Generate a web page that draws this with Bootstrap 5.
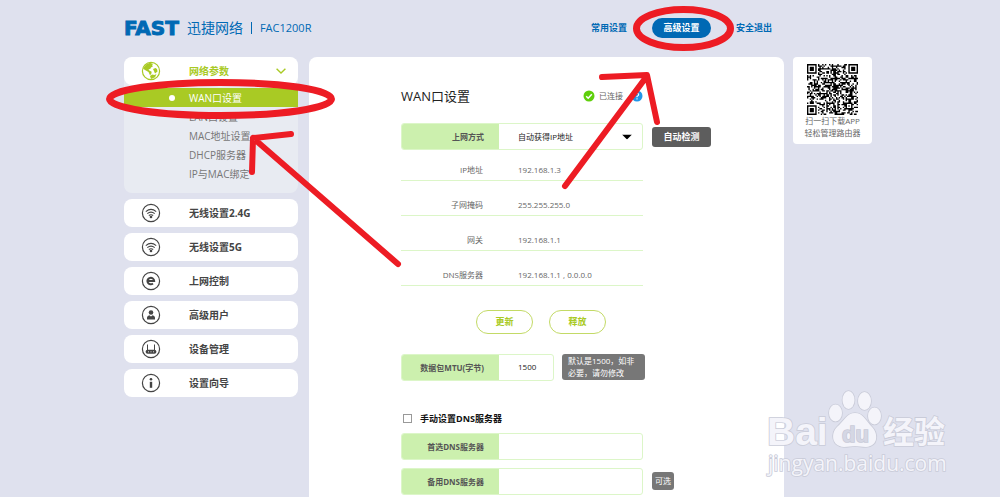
<!DOCTYPE html>
<html lang="zh-CN">
<head>
<meta charset="utf-8">
<meta name="viewport" content="width=device-width, initial-scale=1">
<title>FAST FAC1200R</title>
<link href="https://cdn.jsdelivr.net/npm/bootstrap@5.3.0/dist/css/bootstrap.min.css" rel="stylesheet">
<style>
  :root { --blue:#0069b4; --lime:#a9ca24; --mint:#ccf0ae; --mint-line:#dcf6c8; --page:#dfe1ee; }
  body { background:var(--page); font:8px/12px "Open Sans","Noto Sans CJK SC",sans-serif; color:#666; min-height:100vh; }
  button, input, select { font-family:inherit; }
  .shell { max-width:752px; min-height:100vh; }
  .topbar { height:57px; padding-bottom:2px; color:var(--blue); }
  .logo { font:bold 20px/20px "DejaVu Sans",sans-serif; -webkit-text-stroke:1px var(--blue); }
  .brand-cn { font-size:14px; line-height:20px; }
  .model { font-size:11px; line-height:12px; border-left:1px solid var(--blue); }
  .topnav { gap:25px; margin-right:100px; }
  .topnav a { font-size:9px; font-weight:700; line-height:20px; color:var(--blue); text-decoration:none; }
  .topnav a.active { background:var(--blue); color:#fff; width:59px; text-align:center; border-radius:10px; }
  .side { width:174px; gap:6px; }
  .group { background:#e8ebf2; border-radius:8px; padding-bottom:10px; }
  .entry { height:28px; background:#fff; border-radius:8px; color:#444; font-size:10px; font-weight:700; text-decoration:none; padding:0 12px 0 17px; }
  .entry svg.ico { width:20px; height:20px; margin-right:28px; }
  .entry.open { color:var(--lime); }
  .sub { padding-top:3px; }
  .sub a { display:flex; align-items:center; height:19px; padding-left:65px; font-size:10px; color:#777; text-decoration:none; }
  .sub a.active { background:var(--lime); color:#fff; padding-left:45px; }
  .sub a.active::before { content:""; width:6px; height:6px; border-radius:50%; background:#fff; margin-right:14px; }
  .panel { background:#fff; border-radius:8px 8px 0 0; margin:0 9px 0 11px; padding:27px 24px 0 92px; }
  .panel h1 { font-size:13px; line-height:24px; font-weight:400; color:#222; }
  .heading { margin-bottom:15px; }
  .wide { width:242px; }
  .line { gap:9px; }
  .field { height:27px; border:1px solid var(--mint-line); border-radius:3px; overflow:hidden; background:#fff; }
  .field label { width:97px; background:var(--mint); color:#555; font-weight:700; line-height:25px; text-align:right; padding-right:15px; flex:none; }
  .field input, .field select { min-width:0; flex:1; border:0; outline:0; background:transparent; color:#222; font-size:8px; padding:0 0 0 19px; appearance:none; }
  .mtu { width:153px; }
  .info th, .info td { height:35px; border-bottom:1px solid var(--mint-line); vertical-align:bottom; padding:0 0 4px; font-weight:400; }
  .info tr:first-child > * { height:30px; }
  .info th { width:98px; text-align:right; padding-right:16px; }
  .info td { padding-left:19px; }
  .actions { padding-right:37px; }
  .pill { width:57px; height:24px; padding:0; border:1px solid #c3da66; border-radius:12px; background:#fff; color:var(--lime); font-size:9px; font-weight:700; }
  .detect { width:59px; height:20px; padding:0; border:0; border-radius:3px; background:#5d5d5d; color:#fff; font-size:9px; font-weight:700; }
  .tip { background:#777; color:#fff; border-radius:3px; }
  .tip-mtu { width:83px; padding:1px 6px; }
  .tip-opt { padding:3px; }
  .tick { width:9px; height:9px; margin:0; appearance:none; border:1px solid #999; border-radius:0; background:#fff; }
  .tick:checked { background:var(--lime); }
  .manual { font-size:9px; font-weight:700; color:#111; padding:8px 0 0 2px; }
  .app { width:79px; height:87px; background:#fff; border-radius:4px; padding-top:7px; }
  .marks { position:absolute; left:0; top:0; width:748px; height:497px; overflow:visible; pointer-events:none; }
</style>
</head>
<body>
<div class="shell mx-auto pe-1 d-flex flex-column position-relative">
  <header class="topbar d-flex align-items-center justify-content-between">
    <div class="d-flex align-items-center">
      <span class="logo">FAST</span>
      <span class="brand-cn ms-2">迅捷网络</span>
      <span class="model ms-2 ps-2">FAC1200R</span>
    </div>
    <nav class="topnav d-flex align-items-center">
      <a href="#">常用设置</a><a href="#" class="active">高级设置</a><a href="#">安全退出</a>
    </nav>
  </header>

  <div class="d-flex flex-grow-1">
    <nav class="side d-flex flex-column flex-shrink-0">
      <div class="group">
        <a href="#" class="entry open d-flex align-items-center">
          <svg class="ico" viewBox="0 0 20 20"><circle cx="10" cy="10" r="8.600" fill="none" stroke="#a9ca24" stroke-width="1.200"/><path d="M5 3.500 9 1.800 12 3l-1 1.200 1 1-2 1.200-.8 1.600-1.700.2.8 1.400 2.400 1.200-.4 2-1.300 1.400L7.500 11 4 9 2 7.500zM12 8l2.500-1 1.500 1 .5 2.500L14 12.500l-.8-2zM9 15l2-1.500 2.500.5 2-1-1.500 3.200-4 1.800z" fill="#a9ca24"/></svg>
          <span>网络参数</span>
          <svg class="ms-auto" width="10" height="6" viewBox="0 0 10 6" fill="none" stroke="#a9ca24" stroke-width="1.400"><path d="M.6.7 5 5 9.400.7"/></svg>
        </a>
        <div class="sub">
          <a href="#" class="active">WAN口设置</a><a href="#">LAN口设置</a><a href="#">MAC地址设置</a><a href="#">DHCP服务器</a><a href="#">IP与MAC绑定</a>
        </div>
      </div>
      <a href="#" class="entry d-flex align-items-center"><svg class="ico" viewBox="0 0 20 20"><use href="#wifi"/></svg>无线设置2.4G</a>
      <a href="#" class="entry d-flex align-items-center"><svg class="ico" viewBox="0 0 20 20"><use href="#wifi"/></svg>无线设置5G</a>
      <a href="#" class="entry d-flex align-items-center"><svg class="ico" viewBox="0 0 20 20" fill="none" stroke="#444"><circle cx="10" cy="10" r="8.600" stroke-width="1.200"/><path d="M6.800 10h6.400a3.400 3.200 0 1 0-1.200 2.500" stroke-width="2"/></svg>上网控制</a>
      <a href="#" class="entry d-flex align-items-center"><svg class="ico" viewBox="0 0 20 20"><circle cx="10" cy="10" r="8.600" fill="none" stroke="#444" stroke-width="1.200"/><circle cx="10" cy="7.500" r="2.300" fill="#444"/><path d="M6 14.500v-2q.3-2 2.400-2.200L10 11.500l1.600-1.200q2.100.2 2.400 2.200v2z" fill="#444"/></svg>高级用户</a>
      <a href="#" class="entry d-flex align-items-center"><svg class="ico" viewBox="0 0 20 20"><circle cx="10" cy="10" r="8.600" fill="none" stroke="#444" stroke-width="1.200"/><path d="M6.500 5.500V11M13.500 5.500V11" stroke="#444"/><rect x="4.600" y="10.800" width="10.800" height="4" rx="2" fill="#444"/><path d="M7 12.800h1M9.500 12.800h1M12 12.800h1" stroke="#ddd"/></svg>设备管理</a>
      <a href="#" class="entry d-flex align-items-center"><svg class="ico" viewBox="0 0 20 20" fill="#444"><circle cx="10" cy="10" r="8.600" fill="none" stroke="#444" stroke-width="1.200"/><circle cx="10" cy="6.200" r="1.300"/><rect x="8.800" y="8.800" width="2.400" height="6"/></svg>设置向导</a>
    </nav>

    <main class="panel flex-grow-1">
      <div class="heading wide d-flex align-items-center">
        <h1 class="m-0">WAN口设置</h1>
        <svg class="ms-auto" width="12" height="12" viewBox="0 0 12 12"><circle cx="6" cy="6" r="5.500" fill="#5fcf0b"/><path d="m3.200 6.200 2 2 3.600-3.900" fill="none" stroke="#fff" stroke-width="1.500"/></svg>
        <span class="ms-1">已连接</span>
        <svg class="ms-2" width="12" height="12" viewBox="0 0 12 12"><circle cx="6" cy="6" r="5.500" fill="#2196e8"/><path d="M4.300 4.800Q4.400 3.200 6 3.200t1.700 1.500Q7.700 5.500 6 6.400v.9M6 8.200v1.200" fill="none" stroke="#fff" stroke-width="1.100"/></svg>
      </div>

      <div class="line d-flex align-items-center">
        <div class="field wide d-flex position-relative">
          <label for="mode">上网方式</label>
          <select id="mode"><option>自动获得IP地址</option></select>
          <svg class="position-absolute end-0 top-50 translate-middle-y me-2 pe-none" width="14" height="5" viewBox="0 0 14 5"><path d="M2 0h10L7 5z"/></svg>
        </div>
        <button type="button" class="detect">自动检测</button>
      </div>

      <table class="info wide">
        <tr><th scope="row">IP地址</th><td>192.168.1.3</td></tr>
        <tr><th scope="row">子网掩码</th><td>255.255.255.0</td></tr>
        <tr><th scope="row">网关</th><td>192.168.1.1</td></tr>
        <tr><th scope="row">DNS服务器</th><td>192.168.1.1 , 0.0.0.0</td></tr>
      </table>

      <div class="actions wide d-flex justify-content-end gap-3 mt-4">
        <button type="button" class="pill">更新</button>
        <button type="button" class="pill">释放</button>
      </div>

      <div class="d-flex align-items-center mt-3 pt-1">
        <div class="field mtu d-flex me-1"><label for="mtu">数据包MTU(字节)</label><input id="mtu" value="1500"></div>
        <div class="tip tip-mtu ms-1">默认是1500，如非<br>必要，请勿修改</div>
      </div>

      <div class="manual d-flex align-items-center gap-2 mt-4 mb-2">
        <input class="tick" type="checkbox" id="manual"><label for="manual">手动设置DNS服务器</label>
      </div>

      <div class="line d-flex align-items-center mb-2">
        <div class="field wide d-flex"><label for="dns1">首选DNS服务器</label><input id="dns1"></div>
      </div>
      <div class="line d-flex align-items-center">
        <div class="field wide d-flex"><label for="dns2">备用DNS服务器</label><input id="dns2"></div>
        <span class="tip tip-opt">可选</span>
      </div>
    </main>

    <aside class="app flex-shrink-0 text-center">
      <svg id="qr" class="d-block mx-auto" width="51" height="51" viewBox="0 0 37 37"></svg>
      扫一扫下载APP<br>轻松管理路由器
    </aside>
  </div>

  <svg class="marks" viewBox="124 0 748 497">
    <defs><g id="wifi"><circle cx="10" cy="10" r="8.600" fill="none" stroke="#444" stroke-width="1.200"/><path d="M4.800 8.600Q10 4.200 15.200 8.600M6.300 10.700q3.700-3.100 7.400 0M7.800 12.500q2.200-1.600 4.400 0" fill="none" stroke="#444" stroke-width="1.100"/><circle cx="10" cy="14" r="1.300" fill="#444"/></g></defs>
    <g fill="#f4f4fa" stroke="#c9cbd8" stroke-width="1.600" paint-order="stroke">
      <ellipse cx="835.500" cy="413" rx="6.500" ry="8.500"/><ellipse cx="848.500" cy="400" rx="6" ry="9"/><ellipse cx="864.500" cy="401" rx="6.500" ry="9"/><ellipse cx="874.500" cy="416" rx="6.500" ry="8.500"/>
      <path d="M855 413c8 0 11 8 17 14 6 6 7 19-6 20-4 0-8-1-11-1s-7 1-11 1c-13-1-13-14-7-20 7-6 10-14 18-14z"/>
      <text x="767" y="445" font-family="Liberation Sans" font-weight="700" font-size="39">Bai</text>
      <text x="842" y="442" font-family="Liberation Sans" font-weight="700" font-size="22" fill="#d5d7e4">du</text>
      <text x="883" y="443" font-family="Noto Sans CJK SC" font-weight="700" font-size="31">经验</text>
      <text x="768" y="471" font-family="Open Sans" font-size="21">jingyan.baidu.com</text>
    </g>
    <g fill="none" stroke="#ed1c24" stroke-width="7" stroke-linecap="round" stroke-linejoin="round">
      <ellipse cx="220.500" cy="99" rx="111" ry="16.500"/>
      <ellipse cx="683.500" cy="28.500" rx="47" ry="19"/>
      <path d="M398 264 253 138M291 134l-38 4-1 34" stroke-width="6"/>
      <path d="M565 186 647 76M602 77l45-2 10 47" stroke-width="6"/>
    </g>
  </svg>
</div>
<script>
  // Draws the download code: three finder squares, one alignment square, data modules
  const n = 37, qr = document.getElementById('qr');
  let seed = 11, d = '';
  const square = (x, y, cx, cy, r) => {
    const k = Math.max(Math.abs(x - cx), Math.abs(y - cy));
    return k > r ? null : (r > 3 ? k < 2 || k === 3 : k !== 1);
  };
  for (let y = 0; y < n; y++) for (let x = 0; x < n; x++) {
    seed = (seed * 1103515245 + 12345) % 2147483648;
    const on = square(x, y, 3, 3, 4) ?? square(x, y, n - 4, 3, 4) ?? square(x, y, 3, n - 4, 4) ?? square(x, y, n - 7, n - 7, 2) ?? seed / 2147483648 < .52;
    if (on) d += `M${x} ${y}h1v1h-1z`;
  }
  qr.innerHTML = `<path d="${d}"/>`;
</script>
<script src="https://cdn.jsdelivr.net/npm/bootstrap@5.3.0/dist/js/bootstrap.bundle.min.js"></script>
</body>
</html>
